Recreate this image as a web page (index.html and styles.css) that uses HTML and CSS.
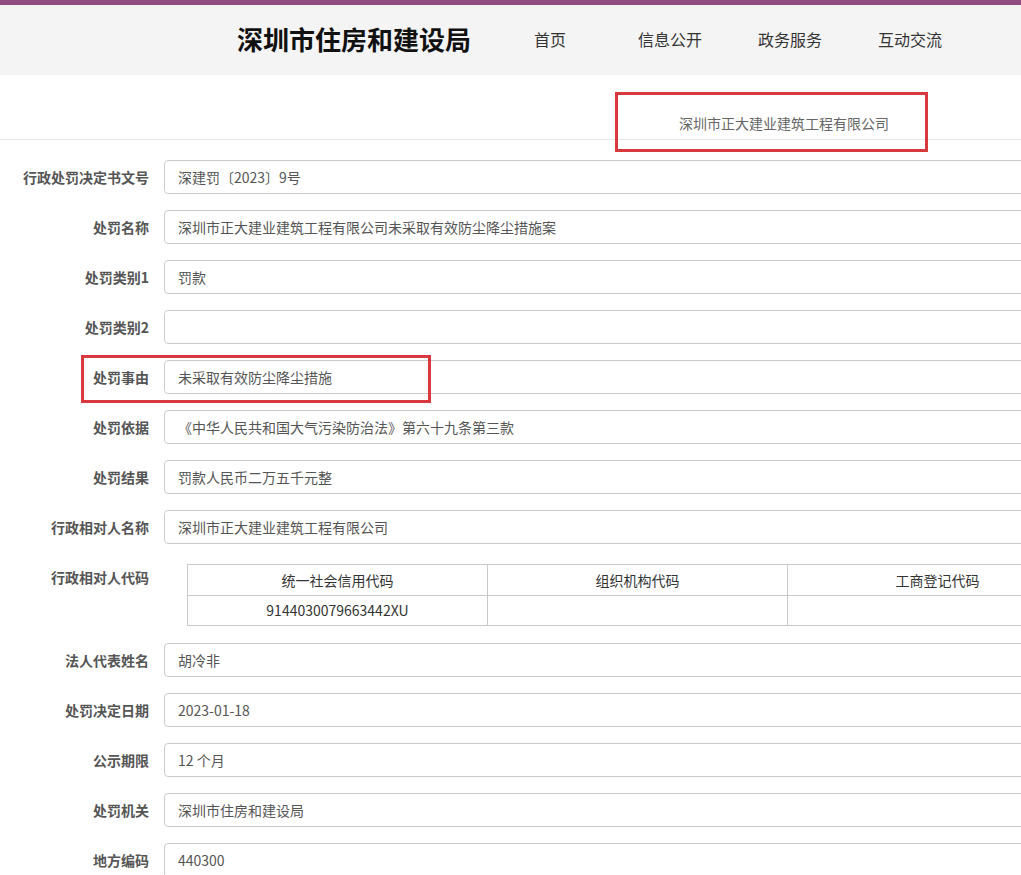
FILE: index.html
```html
<!DOCTYPE html>
<html lang="zh-CN">
<head>
<meta charset="utf-8">
<title>深圳市住房和建设局</title>
<link rel="stylesheet" href="styles.css">
</head>
<body>
<div class="topbar"></div>
<header class="header">
  <div class="title">深圳市住房和建设局</div>
  <nav class="nav">
    <a class="nav-item">首页</a>
    <a class="nav-item">信息公开</a>
    <a class="nav-item">政务服务</a>
    <a class="nav-item">互动交流</a>
  </nav>
</header>
<div class="company">深圳市正大建业建筑工程有限公司</div>
<div class="form">
  <div class="row"><label class="lbl">行政处罚决定书文号</label><div class="field">深建罚〔2023〕9号</div></div>
  <div class="row"><label class="lbl">处罚名称</label><div class="field">深圳市正大建业建筑工程有限公司未采取有效防尘降尘措施案</div></div>
  <div class="row"><label class="lbl">处罚类别1</label><div class="field">罚款</div></div>
  <div class="row"><label class="lbl">处罚类别2</label><div class="field"></div></div>
  <div class="row"><label class="lbl">处罚事由</label><div class="field">未采取有效防尘降尘措施</div></div>
  <div class="row"><label class="lbl">处罚依据</label><div class="field">《中华人民共和国大气污染防治法》第六十九条第三款</div></div>
  <div class="row"><label class="lbl">处罚结果</label><div class="field">罚款人民币二万五千元整</div></div>
  <div class="row"><label class="lbl">行政相对人名称</label><div class="field">深圳市正大建业建筑工程有限公司</div></div>
  <div class="row row-table">
    <label class="lbl">行政相对人代码</label>
    <table class="codes">
      <tr><th>统一社会信用代码</th><th>组织机构代码</th><th>工商登记代码</th></tr>
      <tr><td>9144030079663442XU</td><td></td><td></td></tr>
    </table>
  </div>
  <div class="row"><label class="lbl">法人代表姓名</label><div class="field">胡冷非</div></div>
  <div class="row"><label class="lbl">处罚决定日期</label><div class="field">2023-01-18</div></div>
  <div class="row"><label class="lbl">公示期限</label><div class="field">12 个月</div></div>
  <div class="row"><label class="lbl">处罚机关</label><div class="field">深圳市住房和建设局</div></div>
  <div class="row"><label class="lbl">地方编码</label><div class="field">440300</div></div>
</div>
<div class="mark mark-company"></div>
<div class="mark mark-reason"></div>
</body>
</html>
```
FILE: styles.css
```css
html, body {
  margin: 0;
  padding: 0;
  background: #fff;
  overflow: hidden;
  font-family: "Noto Sans CJK SC", "Noto Sans", "Liberation Sans", sans-serif;
  color: #555;
}
.topbar {
  height: 5px;
  background: #8e4c80;
}
.header {
  height: 70px;
  background: #f4f4f4;
  display: flex;
  align-items: center;
  padding-left: 237px;
}
.title {
  font-size: 26px;
  font-weight: bold;
  color: #111;
  width: 253px;
  line-height: 1;
  margin-top: -2px;
}
.nav {
  display: flex;
}
.nav-item {
  width: 120px;
  text-align: center;
  font-size: 16px;
  color: #333;
  line-height: 1;
  margin-top: -2px;
}
.company {
  height: 58px;
  padding-bottom: 6px;
  border-bottom: 1px solid #e8e8e8;
  padding-left: 679px;
  font-size: 14px;
  color: #666;
  line-height: 20px;
  display: flex;
  align-items: flex-end;
}
.form {
  width: 1150px;
  padding-top: 20px;
}
.row {
  display: flex;
  margin-bottom: 16px;
}
.lbl {
  flex: 0 0 164px;
  box-sizing: border-box;
  padding-right: 15px;
  text-align: right;
  font-size: 14px;
  font-weight: bold;
  color: #555;
  line-height: 34px;
}
.field {
  flex: 1;
  height: 34px;
  box-sizing: border-box;
  border: 1px solid #ccc;
  border-radius: 4px;
  padding: 0 13px;
  font-size: 14px;
  line-height: 32px;
  color: #555;
}
.row-table {
  margin-bottom: 17px;
}
.codes {
  margin-top: 4px;
  margin-left: 23px;
  border-collapse: collapse;
  font-size: 14px;
  color: #333;
}
.codes th, .codes td {
  width: 299px;
  border: 1px solid #c8c8c8;
  text-align: center;
  font-weight: normal;
  padding: 0;
}
.codes th {
  height: 30px;
  line-height: 30px;
}
.codes td {
  height: 29px;
  line-height: 29px;
}
.mark {
  position: absolute;
  border: 3px solid #d8393f;
  box-sizing: border-box;
}
.mark-company {
  left: 615px;
  top: 92px;
  width: 313px;
  height: 60px;
}
.mark-reason {
  left: 81px;
  top: 355px;
  width: 350px;
  height: 48px;
}
```
